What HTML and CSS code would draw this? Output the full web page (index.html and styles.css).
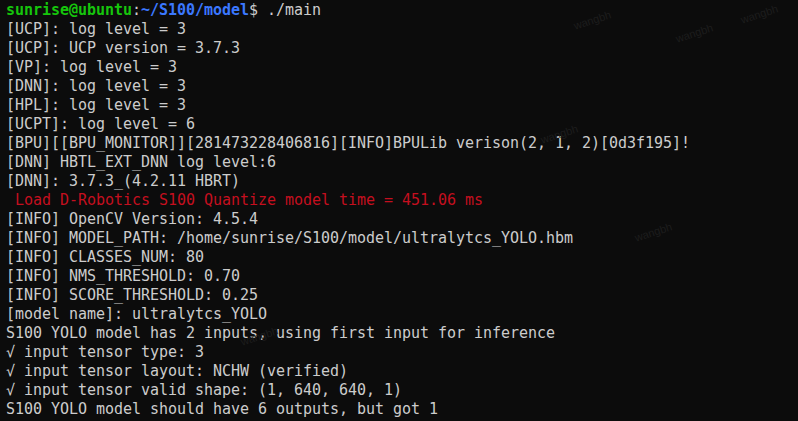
FILE: index.html
```html
<!DOCTYPE html>
<html>
<head>
<meta charset="utf-8">
<link rel="stylesheet" href="styles.css">
</head>
<body>
<div class="term">
<div class="out">
<div class="ln"><span class="g">sunrise@ubuntu</span><span>:</span><span class="b">~/S100/model</span><span>$ ./main</span></div>
<div class="ln">[UCP]: log level = 3</div>
<div class="ln">[UCP]: UCP version = 3.7.3</div>
<div class="ln">[VP]: log level = 3</div>
<div class="ln">[DNN]: log level = 3</div>
<div class="ln">[HPL]: log level = 3</div>
<div class="ln">[UCPT]: log level = 6</div>
<div class="ln">[BPU][[BPU_MONITOR]][281473228406816][INFO]BPULib verison(2, 1, 2)[0d3f195]!</div>
<div class="ln">[DNN] HBTL_EXT_DNN log level:6</div>
<div class="ln">[DNN]: 3.7.3_(4.2.11 HBRT)</div>
<div class="ln r"> Load D-Robotics S100 Quantize model time = 451.06 ms</div>
<div class="ln">[INFO] OpenCV Version: 4.5.4</div>
<div class="ln">[INFO] MODEL_PATH: /home/sunrise/S100/model/ultralytcs_YOLO.hbm</div>
<div class="ln">[INFO] CLASSES_NUM: 80</div>
<div class="ln">[INFO] NMS_THRESHOLD: 0.70</div>
<div class="ln">[INFO] SCORE_THRESHOLD: 0.25</div>
<div class="ln">[model name]: ultralytcs_YOLO</div>
<div class="ln">S100 YOLO model has 2 inputs, using first input for inference</div>
<div class="ln">√ input tensor type: 3</div>
<div class="ln">√ input tensor layout: NCHW (verified)</div>
<div class="ln">√ input tensor valid shape: (1, 640, 640, 1)</div>
<div class="ln">S100 YOLO model should have 6 outputs, but got 1</div>
</div>
<span class="wm wm1">wangbh</span>
<span class="wm wm2">wangbh</span>
<span class="wm wm3">wangbh</span>
<span class="wm wm4">wangbh</span>
<span class="wm wm5">wangbh</span>
<span class="wm wm6">wangbh</span>
</div>
</body>
</html>
```
FILE: styles.css
```css
html, body {
  margin: 0;
  padding: 0;
  background: #0c0c0c;
}
.term {
  position: relative;
  width: 798px;
  height: 421px;
  overflow: hidden;
  background: #0c0c0c;
}
.out {
  display: flex;
  flex-direction: column;
  padding: 1px 0 0 6px;
  font-family: "DejaVu Sans Mono", "Liberation Mono", monospace;
  font-size: 15px;
  line-height: 19px;
  letter-spacing: -0.03px;
  color: #cccccc;
}
.ln {
  white-space: pre;
  height: 19px;
}
.g { color: #16c60c; font-weight: bold; }
.b { color: #3b78ff; font-weight: bold; }
.r { color: #c50f1f; }
.wm {
  position: absolute;
  font-family: "Liberation Sans", Arial, sans-serif;
  font-size: 11px;
  color: #1d1d1d;
  transform: rotate(-18deg);
  white-space: nowrap;
}
.wm1 { left: 573px; top: 14px; }
.wm2 { left: 675px; top: 27px; }
.wm3 { left: 740px; top: 8px; }
.wm4 { left: 634px; top: 226px; }
.wm5 { left: 540px; top: 128px; }
.wm6 { left: 240px; top: 330px; }
```
